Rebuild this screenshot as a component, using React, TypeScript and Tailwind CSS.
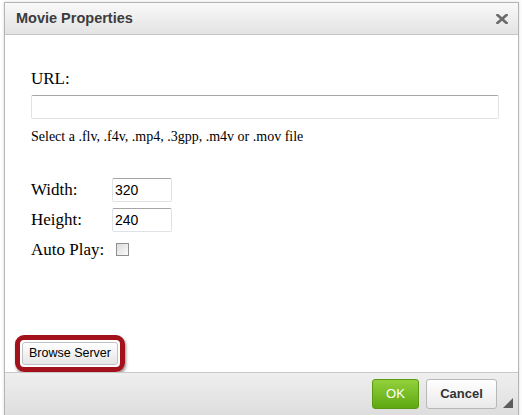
const serif = { fontFamily: '"Liberation Serif", "Times New Roman", serif' };

const Field: React.FC<{ label: string; value: string }> = ({ label, value }) => (
  <div className="flex items-center">
    <span className="w-[81px] text-[17px] leading-[20px]">{label}</span>
    <input
      defaultValue={value}
      className="h-[24px] w-[60px] rounded-[2px] border border-[#dfe3e8] border-t-[#a6a6a6] bg-white px-[2px] font-['Liberation_Sans',Arial,sans-serif] text-[14px] text-black outline-none"
    />
  </div>
);

export default function App() {
  return (
    <div className="flex h-[415px] w-[522px] flex-col overflow-hidden bg-white pl-[4px] pr-[3px] pt-[2px]">
      <div className="flex shrink-0 flex-col border border-[#b5b5b5] shadow-[0_0_3px_rgba(0,0,0,0.15)]">
        {/* title bar */}
        <div className="flex h-[32px] shrink-0 items-center justify-between border-b border-[#c6c6c6] bg-gradient-to-b from-[#f9f9f9] to-[#e3e3e3] pl-[11px] pr-[10px] font-['Liberation_Sans',Arial,sans-serif]">
          <span className="text-[14.5px] font-bold text-[#3c3c3c]">Movie Properties</span>
          <svg width="12" height="10" viewBox="0 0 12 10" className="mt-[1px]">
            <path d="M1.5 1 L10.5 9 M10.5 1 L1.5 9" stroke="#6b6b6b" strokeWidth="2.6" strokeLinecap="square" />
          </svg>
        </div>

        {/* body */}
        <div className="flex h-[337px] shrink-0 flex-col bg-white pl-[26px] pr-[19px] pt-[34px] text-black" style={serif}>
          <div className="text-[17px] leading-[20px]">URL:</div>
          <input className="mt-[6px] h-[24px] w-full shrink-0 rounded-[2px] border border-[#dfe3e8] border-t-[#a6a6a6] bg-white outline-none" />
          <div className="mt-[10px] text-[14px] leading-[16px]">
            Select a .flv, .f4v, .mp4, .3gpp, .m4v or .mov file
          </div>

          <div className="mt-[33px] flex flex-col gap-[6px]">
            <Field label="Width:" value="320" />
            <Field label="Height:" value="240" />
          </div>
          <div className="mt-[8px] flex items-start">
            <span className="w-[85px] text-[17px] leading-[20px]">Auto Play:</span>
            <span className="mt-[3px] h-[13px] w-[13px] border border-[#8e8f8f] bg-gradient-to-br from-[#dcdcdc] to-[#fbfbfb]" />
          </div>

          <div className="flex-1" />
          <div className="-ml-[16px] self-start rounded-[9px] border-[5px] border-[#a3111a] p-[2px] shadow-[1px_2px_3px_rgba(0,0,0,0.45)]">
            <button className="flex h-[23px] w-[96px] items-center justify-center rounded-[3px] border border-[#c2c2c2] bg-gradient-to-b from-white to-[#e6e6e6] font-['Liberation_Sans',Arial,sans-serif] text-[12.5px] text-black">
              Browse Server
            </button>
          </div>
        </div>

        {/* footer */}
        <div className="relative flex h-[52px] shrink-0 items-start justify-end gap-[7px] border-t border-[#c9c9c9] bg-gradient-to-b from-[#efefef] to-[#dadada] pr-[21px] pt-[6px] font-['Liberation_Sans',Arial,sans-serif]">
          <button className="flex h-[30px] w-[47px] items-center justify-center rounded-[3px] border border-[#5a9a12] bg-gradient-to-b from-[#92d13a] to-[#5fa80f] text-[13px] text-white">
            OK
          </button>
          <button className="flex h-[30px] w-[71px] items-center justify-center rounded-[3px] border border-[#b8b8b8] bg-gradient-to-b from-white to-[#e9e9e9] text-[13px] font-bold text-[#333]">
            Cancel
          </button>
          <svg width="10" height="10" viewBox="0 0 10 10" className="absolute right-[5px] top-[25px]">
            <path d="M10 0 L10 10 L0 10 Z" fill="#5c5c5c" />
          </svg>
        </div>
      </div>
    </div>
  );
}
